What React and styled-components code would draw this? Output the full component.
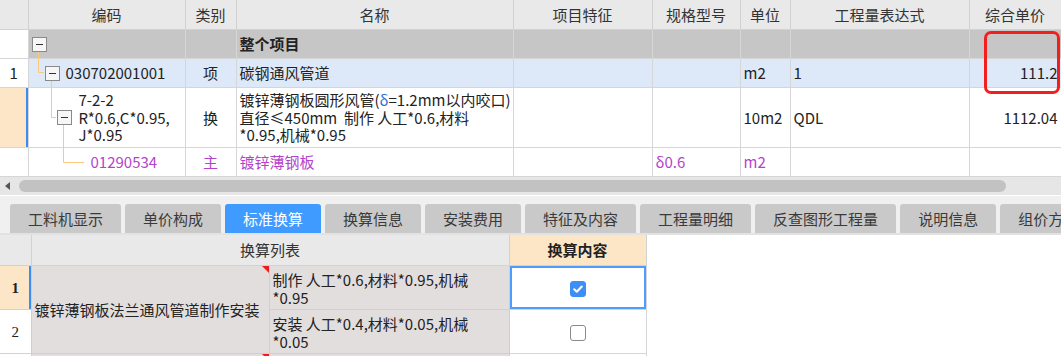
import React from 'react'
import styled, { createGlobalStyle } from 'styled-components'

const Global = createGlobalStyle`
  html, body { margin: 0; padding: 0; background: #fff; }
  body {
    font-family: "Noto Sans CJK SC", "Noto Sans", sans-serif;
    font-size: 15px;
    color: #222;
    overflow: hidden;
  }
`

const PURPLE = '#b443cc'

const columns = [28, 157, 51, 277, 139, 88, 50, 179, 92]
const heads = ['', '编码', '类别', '名称', '项目特征', '规格型号', '单位', '工程量表达式', '综合单价']

function App() {
  return (
    <Page>
      <Global />
      <TopArea>
        <Grid>
          <colgroup>
            {columns.map((w, i) => <col key={i} style={{ width: w }} />)}
          </colgroup>
          <thead>
            <tr>
              {heads.map((h, i) => <Head key={i}>{h}</Head>)}
            </tr>
          </thead>
          <tbody>
            <Row $h={29} $bg="#c6c6c6">
              <NumCell />
              <Cell><Tree $indent={3}><Fold /></Tree></Cell>
              <Cell />
              <Cell><b>整个项目</b></Cell>
              <Cell /><Cell /><Cell /><Cell /><Cell />
            </Row>
            <Row $h={29} $bg="#dde8f9">
              <NumCell>1</NumCell>
              <Cell><Tree $indent={16}><Fold /><span>030702001001</span></Tree></Cell>
              <Cell $center>项</Cell>
              <Cell>碳钢通风管道</Cell>
              <Cell /><Cell />
              <Cell>m2</Cell>
              <Cell>1</Cell>
              <Cell $right>111.2</Cell>
            </Row>
            <Row $h={60}>
              <NumCell $current />
              <Cell>
                <Tree $indent={28} $gap={7}>
                  <Fold />
                  <Lines>7-2-2<br />R*0.6,C*0.95,<br />J*0.95</Lines>
                </Tree>
              </Cell>
              <Cell $center>换</Cell>
              <Cell><Lines>镀锌薄钢板圆形风管(<Delta>δ</Delta>=1.2mm以内咬口)<br />直径≤450mm&nbsp;&nbsp;制作 人工*0.6,材料<br />*0.95,机械*0.95</Lines></Cell>
              <Cell /><Cell />
              <Cell>10m2</Cell>
              <Cell>QDL</Cell>
              <Cell $right>1112.04</Cell>
            </Row>
            <Row $h={29} $color={PURPLE}>
              <NumCell />
              <Cell><Tree $indent={62}><span>01290534</span></Tree></Cell>
              <Cell $center>主</Cell>
              <Cell>镀锌薄钢板</Cell>
              <Cell />
              <Cell>δ0.6</Cell>
              <Cell>m2</Cell>
              <Cell /><Cell />
            </Row>
          </tbody>
        </Grid>
        <TreeLines width="200" height="176">
          <path d="M38.5 51V72.5H44M51.5 79V117.5H56M63.5 124V162.5H84" />
        </TreeLines>
        <Marker />
      </TopArea>

      <HScroll>
        <ArrowLeft />
        <Thumb />
      </HScroll>

      <TabBar>
        {['工料机显示', '单价构成', '标准换算', '换算信息', '安装费用', '特征及内容', '工程量明细', '反查图形工程量', '说明信息', '组价方案'].map(t => (
          <Tab key={t} $active={t === '标准换算'}>{t}</Tab>
        ))}
      </TabBar>

      <SubGrid>
        <colgroup>
          <col style={{ width: 31 }} />
          <col style={{ width: 238 }} />
          <col style={{ width: 240 }} />
          <col style={{ width: 137 }} />
        </colgroup>
        <thead>
          <tr>
            <SubHead />
            <SubHead colSpan={2}>换算列表</SubHead>
            <SubHead $accent>换算内容</SubHead>
          </tr>
        </thead>
        <tbody>
          <SubRow>
            <SubNum $current>1</SubNum>
            <Group rowSpan={2}>镀锌薄钢板法兰通风管道制作安装</Group>
            <Detail><Lines>制作 人工*0.6,材料*0.95,机械<br />*0.95</Lines></Detail>
            <CheckCell $selected><Check $on>
              <svg width="12" height="12" viewBox="0 0 12 12"><path d="M2.2 6.3l2.6 2.5 5-5.3" fill="none" stroke="#fff" strokeWidth="2" strokeLinecap="round" strokeLinejoin="round" /></svg>
            </Check></CheckCell>
          </SubRow>
          <SubRow>
            <SubNum>2</SubNum>
            <Detail><Lines>安装 人工*0.4,材料*0.05,机械<br />*0.05</Lines></Detail>
            <CheckCell><Check /></CheckCell>
          </SubRow>
          <SubRow>
            <SubNum />
            <Group />
            <Detail />
            <CheckCell />
          </SubRow>
        </tbody>
      </SubGrid>
    </Page>
  )
}

export default App

const Page = styled.div`
  width: 1061px;
  height: 356px;
  overflow: hidden;
`
const TopArea = styled.div`
  position: relative;
`
const Grid = styled.table`
  width: 1061px;
  table-layout: fixed;
  border-collapse: collapse;
  line-height: 18px;
`
const Head = styled.th`
  height: 29px;
  padding: 0;
  background: #e9e9e9;
  border: 1px solid #d2d2d2;
  border-top: 0;
  font-weight: normal;
  color: #333;
  text-align: center;
  &:first-child { border-left: 0; }
`
const Row = styled.tr`
  height: ${p => p.$h}px;
  background: ${p => p.$bg || '#fff'};
  color: ${p => p.$color || '#222'};
`
const Cell = styled.td`
  padding: 0 3px;
  border: 1px solid #d6d6d6;
  white-space: nowrap;
  overflow: hidden;
  vertical-align: middle;
  text-align: ${p => p.$center ? 'center' : p.$right ? 'right' : 'left'};
  b { font-weight: bold; }
`
const Lines = styled.div`
  line-height: 17.5px;
`
const NumCell = styled.td`
  padding: 0;
  border: 1px solid #d6d6d6;
  border-left: 0;
  text-align: center;
  background: ${p => p.$current ? '#fde5c8' : '#fff'};
  box-shadow: ${p => p.$current ? 'inset -2px 0 0 #3c8cf5' : 'none'};
  color: #222;
`
const Tree = styled.div`
  display: flex;
  align-items: center;
  gap: ${p => p.$gap || 6}px;
  padding-left: ${p => p.$indent - 3}px;
  position: relative;
  z-index: 2;
`
const Fold = styled.span`
  flex: none;
  width: 13px;
  height: 13px;
  border: 1px solid #8a8a8a;
  background: #f6f6f6;
  position: relative;
  &::after {
    content: '';
    position: absolute;
    left: 3px;
    right: 3px;
    top: 6px;
    height: 1px;
    background: #333;
  }
`
const Delta = styled.span`
  color: #2f6fd6;
`
const TreeLines = styled.svg`
  position: absolute;
  left: 0;
  top: 0;
  z-index: 1;
  pointer-events: none;
  path {
    fill: none;
    stroke: #ffc67e;
    stroke-width: 1;
  }
`
const Marker = styled.div`
  position: absolute;
  left: 984px;
  top: 31px;
  width: 70px;
  height: 57px;
  border: 3px solid #f2201c;
  border-radius: 7px;
  z-index: 3;
`
const HScroll = styled.div`
  height: 18px;
  background: #e6e6e6;
  display: flex;
  align-items: center;
  border-bottom: 1px solid #fff;
`
const ArrowLeft = styled.span`
  width: 0;
  height: 0;
  margin: 0 9px 0 5px;
  border-top: 4px solid transparent;
  border-bottom: 4px solid transparent;
  border-right: 5px solid #555;
`
const Thumb = styled.div`
  width: 987px;
  height: 12px;
  border-radius: 6px;
  background: #c2c2c2;
`
const TabBar = styled.div`
  display: flex;
  gap: 4px;
  padding: 8px 0 0 10px;
  background: #f0f0f0;
  border-bottom: 2px solid #e2e2e2;
`
const Tab = styled.div`
  flex: none;
  height: 29px;
  line-height: 29px;
  padding: 0 18px;
  border-radius: 3px 3px 0 0;
  background: ${p => p.$active ? '#3f9bff' : '#c9c9c9'};
  color: ${p => p.$active ? '#fff' : '#3a3a3a'};
  white-space: nowrap;
`
const SubGrid = styled.table`
  width: 646px;
  table-layout: fixed;
  border-collapse: collapse;
  line-height: 18px;
`
const SubHead = styled.th`
  height: 30px;
  padding: 0;
  background: ${p => p.$accent ? '#fde6c6' : '#e9e9e9'};
  border: 1px solid #d2d2d2;
  border-top: 0;
  font-weight: ${p => p.$accent ? 'bold' : 'normal'};
  color: ${p => p.$accent ? '#222' : '#333'};
  text-align: center;
  &:first-child { border-left: 0; }
`
const SubRow = styled.tr`
  height: 44px;
`
const SubNum = styled.td`
  padding: 0;
  border: 1px solid #d2d2d2;
  border-left: 0;
  text-align: center;
  background: ${p => p.$current ? '#fde5c8' : '#fff'};
  box-shadow: ${p => p.$current ? 'inset -2px 0 0 #3c8cf5' : 'none'};
  font-family: "Liberation Serif", serif;
  font-weight: ${p => p.$current ? 'bold' : 'normal'};
`
const Group = styled.td`
  position: relative;
  padding: 0 3px;
  background: #e2dedd;
  border: 1px solid #cfcfcf;
  white-space: nowrap;
  vertical-align: middle;
  &::after {
    content: '';
    position: absolute;
    right: 0;
    top: 0;
    border-top: 7px solid #f01c1c;
    border-left: 7px solid transparent;
  }
`
const Detail = styled.td`
  padding: 2px 3px 0;
  background: #e2dedd;
  border: 1px solid #cfcfcf;
  white-space: nowrap;
  vertical-align: middle;
`
const CheckCell = styled.td`
  padding: 0;
  border: 1px solid #d6d6d6;
  background: #fff;
  text-align: center;
  box-shadow: ${p => p.$selected ? 'inset 0 0 0 2px #4d9cff' : 'none'};
`
const Check = styled.span`
  display: inline-flex;
  align-items: center;
  justify-content: center;
  box-sizing: border-box;
  width: 16px;
  height: 16px;
  border-radius: 3px;
  vertical-align: middle;
  background: ${p => p.$on ? '#3d8ef6' : '#fff'};
  border: 1px solid ${p => p.$on ? '#3d8ef6' : '#8a8a8a'};
`
